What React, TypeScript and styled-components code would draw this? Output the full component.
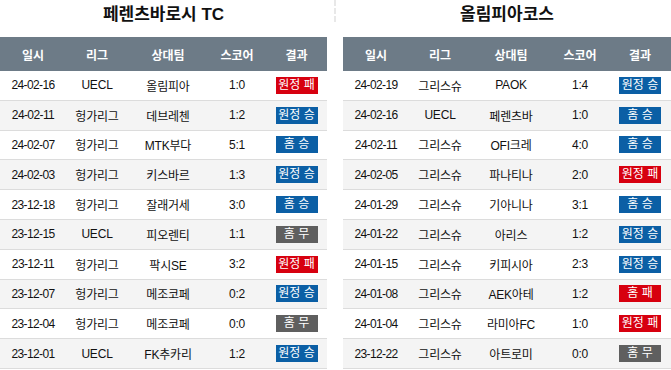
import React from "react";
import styled, { createGlobalStyle } from "styled-components";

type Result = "원정 패" | "원정 승" | "홈 승" | "홈 무" | "홈 패";

interface Match {
  date: string;
  league: string;
  opponent: string;
  score: string;
  result: Result;
}

const ferencvaros: Match[] = [
  { date: "24-02-16", league: "UECL", opponent: "올림피아", score: "1:0", result: "원정 패" },
  { date: "24-02-11", league: "헝가리그", opponent: "데브레첸", score: "1:2", result: "원정 승" },
  { date: "24-02-07", league: "헝가리그", opponent: "MTK부다", score: "5:1", result: "홈 승" },
  { date: "24-02-03", league: "헝가리그", opponent: "키스바르", score: "1:3", result: "원정 승" },
  { date: "23-12-18", league: "헝가리그", opponent: "잘래거세", score: "3:0", result: "홈 승" },
  { date: "23-12-15", league: "UECL", opponent: "피오렌티", score: "1:1", result: "홈 무" },
  { date: "23-12-11", league: "헝가리그", opponent: "팍시SE", score: "3:2", result: "원정 패" },
  { date: "23-12-07", league: "헝가리그", opponent: "메조코페", score: "0:2", result: "원정 승" },
  { date: "23-12-04", league: "헝가리그", opponent: "메조코페", score: "0:0", result: "홈 무" },
  { date: "23-12-01", league: "UECL", opponent: "FK추카리", score: "1:2", result: "원정 승" },
];

const olympiacos: Match[] = [
  { date: "24-02-19", league: "그리스슈", opponent: "PAOK", score: "1:4", result: "원정 승" },
  { date: "24-02-16", league: "UECL", opponent: "페렌츠바", score: "1:0", result: "홈 승" },
  { date: "24-02-11", league: "그리스슈", opponent: "OFI크레", score: "4:0", result: "홈 승" },
  { date: "24-02-05", league: "그리스슈", opponent: "파나티나", score: "2:0", result: "원정 패" },
  { date: "24-01-29", league: "그리스슈", opponent: "기아니나", score: "3:1", result: "홈 승" },
  { date: "24-01-22", league: "그리스슈", opponent: "아리스", score: "1:2", result: "원정 승" },
  { date: "24-01-15", league: "그리스슈", opponent: "키피시아", score: "2:3", result: "원정 승" },
  { date: "24-01-08", league: "그리스슈", opponent: "AEK아테", score: "1:2", result: "홈 패" },
  { date: "24-01-04", league: "그리스슈", opponent: "라미아FC", score: "1:0", result: "원정 패" },
  { date: "23-12-22", league: "그리스슈", opponent: "아트로미", score: "0:0", result: "홈 무" },
];

const badgeColor = (result: Result) => {
  if (result.endsWith("패")) return "#d7000f";
  if (result.endsWith("승")) return "#0b5fa5";
  return "#5f5f5f";
};

const TeamTable: React.FC<{ title: string; matches: Match[] }> = ({ title, matches }) => (
  <Panel>
    <Title>{title}</Title>
    <Table>
      <colgroup>
        <col style={{ width: 66 }} />
        <col style={{ width: 62 }} />
        <col style={{ width: 80 }} />
        <col style={{ width: 58 }} />
        <col />
      </colgroup>
      <thead>
        <tr>
          {["일시", "리그", "상대팀", "스코어", "결과"].map((h) => (
            <HeadCell key={h}>{h}</HeadCell>
          ))}
        </tr>
      </thead>
      <tbody>
        {matches.map((m, i) => (
          <Row key={i} $alt={i % 2 === 1}>
            <Cell $tight>{m.date}</Cell>
            <Cell>{m.league}</Cell>
            <Cell>{m.opponent}</Cell>
            <Cell>{m.score}</Cell>
            <Cell>
              <Badge $color={badgeColor(m.result)}>{m.result}</Badge>
            </Cell>
          </Row>
        ))}
      </tbody>
    </Table>
  </Panel>
);

export default function App() {
  return (
    <>
      <GlobalStyle />
      <Page>
        <TeamTable title="페렌츠바로시 TC" matches={ferencvaros} />
        <Divider />
        <TeamTable title="올림피아코스" matches={olympiacos} />
      </Page>
    </>
  );
}

const GlobalStyle = createGlobalStyle`
  html, body {
    margin: 0;
    padding: 0;
    background: #fff;
    overflow: hidden;
  }
  body {
    font-family: "Liberation Sans", Arial, "Noto Sans CJK KR", sans-serif;
    color: #111;
  }
`;

const Page = styled.div`
  display: grid;
  grid-template-columns: 327px 16px 328px;
  width: 671px;
`;

const Panel = styled.div`
  display: flex;
  flex-direction: column;
`;

const Divider = styled.div`
  justify-self: center;
  width: 0;
  height: 22px;
  border-left: 2px dashed #e8e8e8;
  margin-left: -1px;
`;

const Title = styled.h3`
  margin: 0;
  height: 37px;
  line-height: 29px;
  text-align: center;
  font-size: 17px;
  font-weight: bold;
  color: #111;
`;

const Table = styled.table`
  width: 100%;
  border-collapse: collapse;
  table-layout: fixed;
`;

const HeadCell = styled.th`
  height: 34px;
  padding: 0;
  background: #6d7b87;
  color: #fff;
  font-size: 12px;
  font-weight: bold;
  text-align: center;
`;

const Row = styled.tr<{ $alt: boolean }>`
  background: ${(p) => (p.$alt ? "#f4f4f4" : "#fff")};
  border-bottom: 1px solid #dcdcdc;
`;

const Cell = styled.td<{ $tight?: boolean }>`
  height: 28.8px;
  padding: 0;
  text-align: center;
  font-size: 12px;
  letter-spacing: ${(p) => (p.$tight ? "-0.6px" : "-0.2px")};
  color: #111;
  white-space: nowrap;
`;

const Badge = styled.span<{ $color: string }>`
  display: inline-block;
  width: 42px;
  height: 17px;
  line-height: 17px;
  background: ${(p) => p.$color};
  color: #fff;
  font-size: 12px;
  letter-spacing: 0;
  vertical-align: middle;
`;
